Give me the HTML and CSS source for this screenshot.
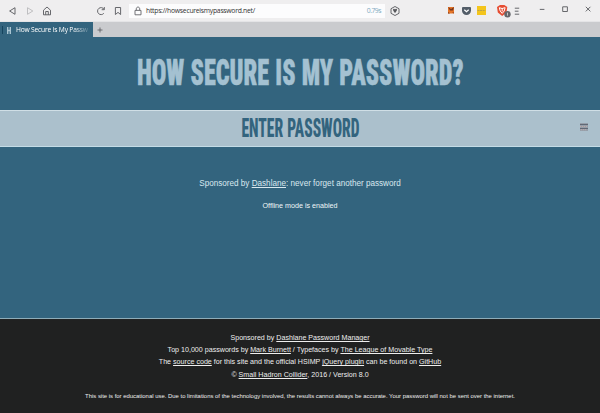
FILE: index.html
```html
<!DOCTYPE html>
<html lang="en">
<head>
<meta charset="utf-8">
<title>How Secure Is My Password?</title>
<link rel="stylesheet" href="styles.css">
</head>
<body>
<div class="browser">
  <header class="toolbar">
    <div class="nav">
      <svg class="icon" viewBox="0 0 12 12"><path d="M9 2.7v6.6L3.6 6z"/></svg>
      <svg class="icon dim" viewBox="0 0 12 12"><path d="M3.5 2.7v6.6L8.8 6z"/></svg>
      <svg class="icon" viewBox="0 0 12 12"><path d="M2.5 5.2 6 2l3.5 3.2v4.6h-7zM4.7 9.8V6.5h2.6v3.3"/></svg>
      <svg class="icon reload" viewBox="0 0 12 12"><path d="M8.8 8.3A3.5 3.5 0 1 1 9 4.2M9.3 2v2.7H6.7"/></svg>
      <svg class="icon" viewBox="0 0 12 12"><path d="M3.4 2.5h5.2v7L6 7.4 3.4 9.5z"/></svg>
    </div>
    <div class="address">
      <svg class="lock" viewBox="0 0 12 12"><path d="M3 5.4h6v4.4H3zM4.3 5.2V3.8C4.3 1.5 7.7 1.5 7.7 3.8v1.4"/></svg>
      <span class="url">https://howsecureismypassword.net/</span>
      <span class="time">0.79s</span>
    </div>
    <svg class="icon shield" viewBox="0 0 12 12"><path d="m6 1.5 4 2.2v4.6l-4 2.2-4-2.2V3.7z"/><path class="solid" d="M4 4.7c0-1.2 1.5-1.2 2-.3.5-.9 2-.9 2 .3C8 6 6 7.9 6 7.9S4 6 4 4.7z"/></svg>
    <div class="extensions">
      <svg class="fox" viewBox="0 0 6 7"><path fill="#e77628" d="M0 0h6v6.5H0z"/><path fill="#76371f" d="m0 0 3 2 3-2-1 3.5H2zM0 5l2 1.5H0zM4 5.5h2v1z"/></svg>
      <svg class="pocket" viewBox="0 0 9 8"><path fill="#535d68" d="M1 0h7q1 0 1 1v2.5a4.5 4.5 0 0 1-9 0V1q0-1 1-1z"/><path fill="none" stroke="#fff" stroke-width="1.2" d="m2.3 2.8 2.2 2 2.2-2"/></svg>
      <svg class="note" viewBox="0 0 9 9"><path fill="#f4c51c" d="M0 0h9v9H0z"/><path fill="none" stroke="#b9a24b" stroke-dasharray="2 .6" d="M.5 4.5h8"/></svg>
      <svg class="brave" viewBox="0 0 14 13"><path fill="#e64d32" d="m3 0-3 2 .8 5.6L5.2 11 9.5 7.6l.8-5.6-3-2z"/><path fill="none" stroke="#fff" d="M2.3 2.7 3.2 6 5.2 8.4 7.2 6l.9-3.3-3 .8zM5.2 3v3.4"/><circle cx="10.5" cy="9.3" r="3.2" fill="#65666a"/><path stroke="#ddd" stroke-width=".8" d="M10.5 7.7v3"/></svg>
      <svg class="icon menu" viewBox="0 0 12 12"><path d="M3.8 3.2h4.4M3.8 6.2h3.7M3.8 9.2h4.4"/></svg>
    </div>
    <div class="window">
      <svg class="icon" viewBox="0 0 12 12"><path d="M3.8 6.4h4.6"/></svg>
      <svg class="icon" viewBox="0 0 12 12"><path d="M3.7 3.8h4.7v4.7H3.7z"/></svg>
      <svg class="icon" viewBox="0 0 12 12"><path d="m3.8 3.8 4.6 4.6m0-4.6L3.8 8.4"/></svg>
    </div>
  </header>
  <div class="tabs">
    <div class="tab">
      <svg class="favicon" viewBox="0 0 12 12"><path stroke="#16445e" d="M2.5 2v8"/><path stroke="#aac5d2" stroke-width="1.4" d="M7.7 3v7M10.3 3v7M7.7 6.5h3"/></svg>
      <span class="tab-title">How Secure Is My Passw</span>
    </div>
    <svg class="plus" viewBox="0 0 8 8"><path d="M1.5 4h5M4 1.5v5"/></svg>
  </div>
</div>
<main>
  <h1><svg class="heading" viewBox="0 0 600 40"><text x="137" y="33.2" textLength="326.5" lengthAdjust="spacingAndGlyphs">HOW SECURE IS MY PASSWORD?</text></svg></h1>
  <div class="field">
    <svg class="prompt" viewBox="0 0 600 36"><text x="241.5" y="26" textLength="118" lengthAdjust="spacingAndGlyphs">ENTER PASSWORD</text></svg>
    <svg class="keys" viewBox="0 0 8 8"><path fill="#969fa9" d="M0 0h8v8H0z"/><path stroke="#616875" d="M0 1.5h8M0 5.5h8"/><path stroke="#c1a8a8" stroke-dasharray="1 1" d="M0 3.5h8M1 6.7h6"/></svg>
  </div>
  <p class="sponsor">Sponsored by <a href="#">Dashlane</a>: never forget another password</p>
  <p class="offline">Offline mode is enabled</p>
</main>
<footer>
  <p>Sponsored by <a href="#">Dashlane Password Manager</a></p>
  <p>Top 10,000 passwords by <a href="#">Mark Burnett</a> / Typefaces by <a href="#">The League of Movable Type</a></p>
  <p>The <a href="#">source code</a> for this site and the official HSIMP <a href="#">jQuery plugin</a> can be found on <a href="#">GitHub</a></p>
  <p>© <a href="#">Small Hadron Collider</a>, 2016 / Version 8.0</p>
  <p class="legal">This site is for educational use. Due to limitations of the technology involved, the results cannot always be accurate. Your password will not be sent over the internet.</p>
</footer>
</body>
</html>
```
FILE: styles.css
```css
* { box-sizing: border-box; }
body { margin: 0; width: 600px; height: 413px; overflow: hidden; display: flex; flex-direction: column; font-family: "Liberation Sans", Arial, sans-serif; background: #33647e; }
p, h1 { margin: 0; }
a { color: inherit; text-underline-offset: 1px; text-decoration-thickness: 1px; }
svg { display: block; flex: none; }
.toolbar { height: 22px; display: flex; align-items: center; background: #efeeef; border-bottom: 1px solid #e4e4e6; }
.icon { width: 12px; height: 12px; fill: none; stroke: #57585c; stroke-width: .9; }
.solid { fill: #57585c; stroke: none; }
.dim { opacity: .35; }
.nav { width: 129px; padding-left: 6px; display: flex; gap: 5.5px; }
.reload { margin-left: 36px; }
.address { width: 256px; height: 14px; background: #fcfcfd; display: flex; align-items: center; font-family: "Open Sans", sans-serif; font-size: 6.8px; color: #333; }
.lock { width: 12px; height: 12px; margin: 0 2px 0 3px; fill: none; stroke: #64656a; stroke-width: .9; }
.url { line-height: 12px; letter-spacing: -.26px; }
.time { margin-left: auto; padding-right: 4px; color: #7faabf; font-size: 6.8px; letter-spacing: -.5px; }
.shield { margin-left: 4px; }
.extensions { margin-left: 47px; display: flex; align-items: center; }
.fox { width: 6px; height: 7px; }
.pocket { width: 9px; height: 8px; margin-left: 8px; }
.note { width: 9px; height: 9px; margin-left: 6px; }
.brave { width: 14px; height: 13px; margin: 1px 0 0 11px; }
.menu { margin-left: 0; }
.window { margin: -4px 0 0 13px; display: flex; gap: 11px; }
.tabs { height: 15px; background: #cacbce; display: flex; align-items: center; }
.tab { width: 93px; height: 15px; background: #33647e; color: #fff; display: flex; align-items: center; }
.favicon { width: 12px; height: 12px; margin-right: 4px; fill: none; }
.tab-title { white-space: nowrap; font: 6.7px/12px "Open Sans", sans-serif; letter-spacing: -.2px; -webkit-mask-image: linear-gradient(90deg, #000 80%, #0003); mask-image: linear-gradient(90deg, #000 80%, #0003); }
.plus { width: 8px; height: 8px; margin-left: 3px; stroke: #55575b; stroke-width: .8; }
main { height: 281px; background: #33647e; color: #d9e8ef; text-align: center; }
h1 { height: 73px; padding-top: 15px; }
.heading { width: 600px; height: 40px; font: 900 37px Roboto, "Liberation Sans", sans-serif; font-stretch: 75%; word-spacing: 1px; fill: #a4c1d1; stroke: #a4c1d1; stroke-width: .5; }
.field { height: 37px; background: #abc0cc; border-top: 1px solid #d0dfe6; border-bottom: 1px solid #c4dce6; display: flex; align-items: center; }
.prompt { width: 600px; height: 36px; margin-right: -20px; font: 800 25.5px Roboto, "Liberation Sans", sans-serif; font-stretch: 75%; word-spacing: 1px; fill: #33647e; stroke: #33647e; stroke-width: .1; }
.keys { width: 8px; height: 8px; margin-top: -3px; }
.sponsor { margin-top: 30px; padding-top: 1px; font-size: 8.13px; line-height: 12px; }
.offline { margin-top: 11px; font-size: 7.15px; line-height: 11px; color: #f0f6f9; }
footer { height: 95px; padding-top: 13px; background: #202121; border-top: 1px solid #8eacb8; color: #eee; text-align: center; font-size: 7.12px; line-height: 12.2px; white-space: nowrap; }
.legal { margin-top: 10px; font-size: 5.93px; line-height: 10px; }
```
